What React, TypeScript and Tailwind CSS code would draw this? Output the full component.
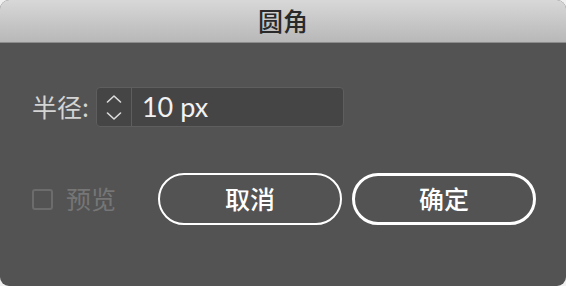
const cjk = { fontFamily: '"Noto Sans CJK SC", sans-serif' };

function Stepper() {
  return (
    <div className="flex h-full w-[35px] flex-col items-center justify-center gap-[9px] border-r border-[#5e5e5e]">
      <svg width="16" height="8" viewBox="0 0 16 8" fill="none" stroke="#dcdcdc" strokeWidth="1.6" strokeLinecap="round" strokeLinejoin="round">
        <path d="M1.5 7 L8 1 L14.5 7" />
      </svg>
      <svg width="16" height="8" viewBox="0 0 16 8" fill="none" stroke="#dcdcdc" strokeWidth="1.6" strokeLinecap="round" strokeLinejoin="round">
        <path d="M1.5 1 L8 7 L14.5 1" />
      </svg>
    </div>
  );
}

export default function App() {
  return (
    <div className="h-[286px] w-[566px] bg-[#f0f0f0]">
      <div className="flex h-full w-full flex-col overflow-hidden rounded-[9px] bg-[#535353]">
        <div
          className="flex h-[43px] items-center justify-center border-b border-[#8c8c8c] bg-gradient-to-b from-[#d8d8d8] to-[#b8b8b8] text-[25px] font-medium text-[#2a2a2a]"
          style={cjk}
        >
          圆角
        </div>

        <div className="flex flex-1 flex-col pl-[32px] pr-[30px] pt-[44px]">
          <div className="flex items-center gap-[7px]">
            <span className="text-[25px] text-[#d4d4d4]" style={cjk}>
              半径:
            </span>
            <div className="flex h-[40px] w-[248px] items-center rounded-[4px] border border-[#5e5e5e] bg-[#454545]">
              <Stepper />
              <span
                className="pl-[10px] text-[27px] text-[#f2f2f2]"
                style={{ fontFamily: 'Lato, "Open Sans", sans-serif' }}
              >
                10 px
              </span>
            </div>
          </div>

          <div className="mt-[46px] flex items-center">
            <div className="flex items-center gap-[13px]">
              <div className="h-[21px] w-[21px] rounded-[3px] border-2 border-[#6c6c6c]" />
              <span className="text-[25px] text-[#767676]" style={cjk}>
                预览
              </span>
            </div>
            <div className="ml-auto flex gap-[10px]">
              <button
                className="flex h-[52px] w-[184px] items-center justify-center rounded-full border-2 border-white text-[25px] font-medium text-white"
                style={cjk}
              >
                取消
              </button>
              <button
                className="flex h-[52px] w-[184px] items-center justify-center rounded-full border-[3px] border-white text-[25px] font-medium text-white"
                style={cjk}
              >
                确定
              </button>
            </div>
          </div>
        </div>
      </div>
    </div>
  );
}
